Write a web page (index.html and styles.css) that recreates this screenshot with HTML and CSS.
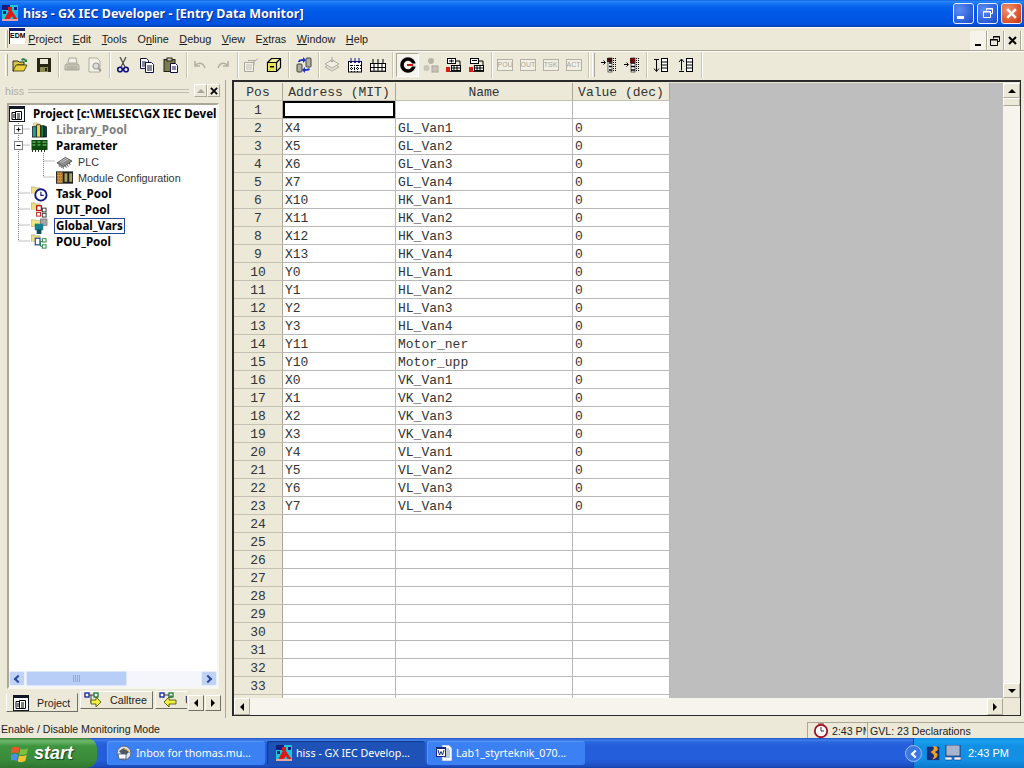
FILE: index.html
```html
<!DOCTYPE html>
<html lang="en">
<head>
<meta charset="utf-8">
<title>hiss - GX IEC Developer - [Entry Data Monitor]</title>
<link rel="stylesheet" href="styles.css">
</head>
<body>
<svg class="defs" width="0" height="0" aria-hidden="true">
  <defs>
    <symbol id="i-app" viewBox="0 0 16 16">
      <rect width="16" height="16" fill="#18c8d8"/><rect x="0" y="0" width="8" height="5" fill="#102080"/>
      <rect x="1" y="6" width="3" height="3" fill="#102080"/><rect x="12" y="2" width="3" height="3" fill="#102080"/>
      <rect x="6" y="2" width="4" height="4" fill="#e01818"/><path d="M7 6h3l4 6 2 3h-4l-2-4-3 4H2l3-6z" fill="#e01818"/>
      <rect x="0" y="14" width="16" height="2" fill="#e8a0a0"/>
    </symbol>
    <symbol id="i-open" viewBox="0 0 16 16">
      <path d="M1 4h5l1 1h5v3H5L2 14H1z" fill="#d8c850" stroke="#000" stroke-width=".8"/>
      <path d="M4 8h11l-3 6H1z" fill="#e8d040" stroke="#303000" stroke-width=".8"/>
      <path d="M9 2c2-1 4-1 5 1l1-1v3h-3l1-1c-1-1-2-1-3 0z" fill="#208040"/>
    </symbol>
    <symbol id="i-save" viewBox="0 0 16 16">
      <rect x="1" y="1" width="14" height="14" fill="#262612"/><rect x="4" y="2" width="8" height="5" fill="#ece9d8"/>
      <rect x="4" y="10" width="8" height="5" fill="#8a8a50"/><rect x="9" y="11" width="2" height="3" fill="#262612"/>
    </symbol>
    <symbol id="i-print" viewBox="0 0 16 16">
      <path d="M5 1h7l1 5H4z" fill="#f4f2e8" stroke="#a8a59a"/><path d="M2 7h12l1 2v4H1V9z" fill="#c8c5b8" stroke="#a8a59a"/>
      <path d="M3 10h10M3 12h10" stroke="#a8a59a"/>
    </symbol>
    <symbol id="i-preview" viewBox="0 0 16 16">
      <path d="M2 1h8l3 3v11H2z" fill="#f4f2e8" stroke="#b0ad9f"/><circle cx="9" cy="9" r="3" fill="#ddd" stroke="#a09d90" stroke-width="1.2"/>
      <path d="M11 11l3 3" stroke="#a09d90" stroke-width="2"/>
    </symbol>
    <symbol id="i-cut" viewBox="0 0 16 16">
      <path d="M5 0l5 10M11 0L6 10" stroke="#505050" stroke-width="1.3" fill="none"/>
      <circle cx="5" cy="12.5" r="2.3" fill="none" stroke="#101080" stroke-width="1.6"/>
      <circle cx="11" cy="12.5" r="2.3" fill="none" stroke="#101080" stroke-width="1.6"/>
    </symbol>
    <symbol id="i-copy" viewBox="0 0 16 16">
      <path d="M1.500 1.500h6l2 2v8h-8z" fill="#fff" stroke="#101040"/><path d="M6.500 5.500h6l2 2v8h-8z" fill="#fff" stroke="#101040"/>
      <path d="M3 5h4M3 7h3M3 9h3M8 9h5M8 11h5M8 13h5" stroke="#101040"/>
    </symbol>
    <symbol id="i-paste" viewBox="0 0 16 16">
      <rect x="1" y="2.500" width="11" height="12" fill="#7c7c50" stroke="#202010"/><rect x="4" y="1" width="5" height="3" fill="#d0d0c0" stroke="#202010"/>
      <path d="M7.500 6.500h5l2 2v7h-7z" fill="#fff" stroke="#101040"/><path d="M9 10h4M9 12h4" stroke="#101040"/>
    </symbol>
    <symbol id="i-undo" viewBox="0 0 16 16"><path d="M3 4v5h5M3 9c3-4 8-4 10 2" fill="none" stroke="#b4b1a4" stroke-width="1.600"/></symbol>
    <symbol id="i-redo" viewBox="0 0 16 16"><path d="M13 4v5H8M13 9c-3-4-8-4-10 2" fill="none" stroke="#b4b1a4" stroke-width="1.600"/></symbol>
    <symbol id="i-props" viewBox="0 0 16 16">
      <path d="M1.500 5.500h9v9h-9z" fill="#f4f2e8" stroke="#aaa79a"/><path d="M5 3.500h8l2-2M11 3v5" stroke="#aaa79a" fill="none"/>
      <path d="M3 8h6M3 10h6M3 12h6" stroke="#c0bdb0"/>
    </symbol>
    <symbol id="i-box" viewBox="0 0 16 16">
      <path d="M1.500 5.500l4-4h9v9l-4 4h-9z" fill="#f0f0a0" stroke="#000" stroke-width="1.200"/>
      <path d="M1.500 5.500h9v9M10.500 5.500l4-4" fill="none" stroke="#000" stroke-width="1.200"/>
      <rect x="2" y="6" width="8" height="8" fill="#e8e060"/><rect x="4" y="9" width="4" height="1.500" fill="#000"/>
    </symbol>
    <symbol id="i-compare" viewBox="0 0 16 16">
      <rect x="1" y="7" width="5" height="8" rx="1" fill="#b0b0a0" stroke="#404040"/><rect x="10" y="1" width="5" height="9" rx="1" fill="#b0b0a0" stroke="#404040"/>
      <path d="M2 5c0-2 2-3 5-3V0l3 3-3 3V4C5 4 4 4 4 5z" fill="#2030c0"/><path d="M14 12c0 1-2 2-5 2v2l-3-3 3-3v2c2 0 3 0 3-1z" fill="#2030c0"/>
    </symbol>
    <symbol id="i-stack" viewBox="0 0 16 16">
      <path d="M1 10l7-4 7 4-7 4z" fill="#e4e1d4" stroke="#b0ad9f"/><path d="M1 7l7-4 7 4-7 4z" fill="#f0eee2" stroke="#b0ad9f"/>
      <path d="M8 0v5M6 3l2 2 2-2" stroke="#a8a59a" fill="none"/>
    </symbol>
    <symbol id="i-grid1" viewBox="0 0 16 16">
      <rect x="1.500" y="4.500" width="13" height="10.500" fill="#fff" stroke="#000"/>
      <path d="M1 8.500h14M1 11.500h14M4.500 8v7M7.500 8v7M10.500 8v7" stroke="#000" stroke-dasharray="1 1"/>
      <path d="M4 1v5M2.500 4L4 6l1.500-2M8 1v5M6.500 4L8 6l1.500-2M12 1v5M10.500 4L12 6l1.500-2" stroke="#1818a0" fill="none"/>
    </symbol>
    <symbol id="i-grid2" viewBox="0 0 16 16">
      <rect x=".5" y="6.500" width="15" height="8" fill="#fff" stroke="#000"/>
      <path d="M0 10.500h16M4 7v8M8 7v8M12 7v8" stroke="#000"/>
      <path d="M3 2v4M8 2v4M13 2v4" stroke="#000"/>
      <path d="M1 14h14" stroke="#404040"/>
    </symbol>
    <symbol id="i-c" viewBox="0 0 16 16">
      <circle cx="8" cy="8" r="6" fill="none" stroke="#000" stroke-width="3.600"/>
      <path d="M9 8h7" stroke="#ece9d8" stroke-width="3"/><path d="M7 8h6" stroke="#c81818" stroke-width="2"/>
    </symbol>
    <symbol id="i-gnet" viewBox="0 0 16 16">
      <circle cx="8" cy="4" r="3" fill="#b8b5a8"/><circle cx="3.500" cy="11" r="3" fill="#c8c5b8"/><rect x="9" y="9" width="6" height="6" fill="#c8c5b8" stroke="#a8a59a"/>
    </symbol>
    <symbol id="i-net1" viewBox="0 0 16 16">
      <rect x="1.500" y="1.500" width="8" height="5" fill="#fff" stroke="#000"/><path d="M3 4h5M5.500 2.500v3" stroke="#000"/>
      <path d="M9 4h5v4" fill="none" stroke="#000"/>
      <rect x="5.500" y="8.500" width="9" height="5" fill="#fff" stroke="#000"/><path d="M6 11h8M8 9v4M11 9v4" stroke="#000"/>
      <path d="M0 10h4v5H0z" fill="#e01818"/><rect x="4" y="14" width="11" height="1" fill="#202020"/>
    </symbol>
    <symbol id="i-net2" viewBox="0 0 16 16">
      <rect x="1.500" y="1.500" width="8" height="5" fill="#fff" stroke="#000"/><path d="M3 3.500h5" stroke="#000"/>
      <path d="M9 4h5v4" fill="none" stroke="#000"/>
      <rect x="5.500" y="8.500" width="9" height="5" fill="#fff" stroke="#000"/><path d="M6 11h8M8 9v4M11 9v4" stroke="#000"/>
      <path d="M0 10h4v5H0z" fill="#e01818"/><rect x="4" y="14" width="11" height="1" fill="#202020"/>
    </symbol>
    <symbol id="i-ins1" viewBox="0 0 16 16">
      <rect x="7" y="1" width="4" height="14" fill="#fff" stroke="#000" stroke-width=".6"/>
      <path d="M8 2.500h2.800M8 6h2.800M8 9.500h2.800M8 13h2.800" stroke="#000" stroke-width="1.500"/>
      <rect x="6" y="1" width="5" height="4" fill="#401010"/><path d="M12.500 1v14M14.500 1v14" stroke="#000" stroke-dasharray="1 1"/>
      <path d="M0 5.500h4M2.500 3.500l2 2-2 2" stroke="#000" fill="none"/>
    </symbol>
    <symbol id="i-ins2" viewBox="0 0 16 16">
      <rect x="7" y="1" width="4" height="14" fill="#fff" stroke="#000" stroke-width=".6"/>
      <path d="M7 6h4M7 9.500h4M7 13h4" stroke="#000" stroke-width="1.500"/>
      <rect x="6" y="1" width="5" height="5" fill="#601010"/><path d="M12.500 1v14M14.500 1v14" stroke="#000" stroke-dasharray="1 1"/>
      <path d="M0 7.500h4M2.500 5.500l2 2-2 2" stroke="#000" fill="none"/>
    </symbol>
    <symbol id="i-ind1" viewBox="0 0 16 16">
      <path d="M1 2.500h5M3.500 3v11M1 11.500l2.500 3 2.500-3" stroke="#000" fill="none"/>
      <rect x="8.500" y="1.500" width="6" height="13" fill="#fff" stroke="#000"/><path d="M8 5h7M8 8h7M8 11h7" stroke="#000"/>
    </symbol>
    <symbol id="i-ind2" viewBox="0 0 16 16">
      <path d="M1 5l2.500-3L6 5M3.500 2.500v11M1 14.500h5" stroke="#000" fill="none"/>
      <rect x="8.500" y="1.500" width="6" height="13" fill="#fff" stroke="#000"/><path d="M8 5h7M8 8h7M8 11h7" stroke="#000"/>
    </symbol>
    <symbol id="i-project" viewBox="0 0 16 16">
      <rect width="16" height="16" fill="#101828"/><rect x="1" y="3" width="14" height="12" fill="#fff"/>
      <path d="M3 6.500h5v7H3z" fill="#fff" stroke="#000"/><path d="M6.500 5.500h6v8h-6z" fill="#fff" stroke="#000"/><path d="M8 8h3M8 10h3M8 12h3M4 9h2M4 11h2" stroke="#000"/>
    </symbol>
    <symbol id="i-lib" viewBox="0 0 17 17">
      <path d="M2 1h6v3H2z" fill="#ece8a8" stroke="#a8a080" stroke-width=".5"/>
      <rect x="1" y="5" width="4" height="11" fill="#20a0a0" stroke="#000" stroke-width=".7"/>
      <rect x="5.500" y="3" width="4" height="13" fill="#e8d830" stroke="#000" stroke-width=".7"/>
      <rect x="10" y="4" width="3" height="12" fill="#208040" stroke="#000" stroke-width=".7"/>
      <path d="M13 4l3 1v11h-3z" fill="#104040" stroke="#000" stroke-width=".7"/>
    </symbol>
    <symbol id="i-param" viewBox="0 0 16 16">
      <rect y="2" width="16" height="10" fill="#0c4a10"/>
      <path d="M1 4h3M6 4h3M11 4h4M1 7h3M6 7h3M11 7h4" stroke="#80e080"/>
      <path d="M1 12v2M4 12v2M7 12v2M10 12v2M13 12v2" stroke="#204020"/>
    </symbol>
    <symbol id="i-chip" viewBox="0 0 18 16">
      <path d="M1 9l9-6 7 4-9 6z" fill="#8a8a88" stroke="#303030" stroke-width=".7"/>
      <path d="M3 11l1 2M5 12l1 2M7 13l1 2M10 12l1 2M12 11l1 2M14 9l1 2" stroke="#404040"/>
      <path d="M4 8l8-5M6 9l8-5" stroke="#c8c8c8"/>
    </symbol>
    <symbol id="i-module" viewBox="0 0 18 16">
      <rect y="1" width="18" height="13" fill="#202020"/><rect x="1" y="2" width="6" height="11" fill="#d89840"/>
      <path d="M1 4h6M1 7h6M1 10h6" stroke="#603010" stroke-dasharray="1 1"/>
      <rect x="9" y="3" width="3" height="9" fill="#a8a060"/><rect x="14" y="3" width="3" height="9" fill="#a8a060"/>
    </symbol>
    <symbol id="i-folder" viewBox="0 0 10 8"><path d="M0 1h4l1 1h5v6H0z" fill="#ecdf88" stroke="#9a9468" stroke-width=".6"/></symbol>
    <symbol id="i-task" viewBox="0 0 18 17">
      <use href="#i-folder" x="0" y="0" width="10" height="8"/>
      <circle cx="10.500" cy="9.500" r="6" fill="#fff" stroke="#101880" stroke-width="2"/>
      <path d="M10.500 6v4h3" stroke="#101880" fill="none" stroke-width="1.200"/>
    </symbol>
    <symbol id="i-dut" viewBox="0 0 18 17">
      <use href="#i-folder" x="0" y="0" width="10" height="8"/>
      <rect x="6" y="4" width="5" height="5" fill="#fff" stroke="#c01818" stroke-width="1.400"/>
      <rect x="12" y="6.500" width="4" height="4" fill="#fff" stroke="#303030"/>
      <rect x="6" y="11" width="4" height="4" fill="#fff" stroke="#c01818"/><rect x="12" y="12" width="4" height="4" fill="#fff" stroke="#303030"/>
    </symbol>
    <symbol id="i-global" viewBox="0 0 18 17">
      <path d="M0 2h5l1 1h5v6H0z" fill="#f0e880" stroke="#a8a060" stroke-width=".6"/>
      <rect x="10" y="1" width="7" height="7" fill="#a8a5a8" stroke="#605860" stroke-width=".6"/>
      <rect x="4" y="6" width="9" height="7" fill="#18808c"/><rect x="6" y="12" width="5" height="5" fill="#0c5060"/>
    </symbol>
    <symbol id="i-pou" viewBox="0 0 18 17">
      <use href="#i-folder" x="0" y="0" width="10" height="8"/>
      <rect x="4.500" y="4.500" width="5" height="7" fill="#fff" stroke="#2038a0" stroke-width="1.200"/>
      <rect x="12" y="5" width="4" height="3.500" fill="#fff" stroke="#208040"/><rect x="12" y="11.500" width="4" height="3.500" fill="#fff" stroke="#208040"/>
      <path d="M10 8h2M10 8v5h2" stroke="#208040" fill="none"/>
    </symbol>
    <symbol id="i-calltree" viewBox="0 0 18 16">
      <rect x="1" y="1" width="4" height="4" fill="#fff" stroke="#1020a0" stroke-width="1.300"/>
      <rect x="10" y="1" width="4" height="4" fill="#fff" stroke="#108030" stroke-width="1.300"/>
      <path d="M5 3h5M7 3v8" stroke="#404040" fill="none"/>
      <path d="M7 8h5V5l5 5-5 5v-3H7z" fill="#f0f040" stroke="#404010" stroke-width=".8"/>
    </symbol>
    <symbol id="i-usedby" viewBox="0 0 18 16">
      <rect x="1" y="1" width="4" height="4" fill="#fff" stroke="#1020a0" stroke-width="1.300"/>
      <rect x="10" y="1" width="4" height="4" fill="#fff" stroke="#108030" stroke-width="1.300"/>
      <path d="M5 3h5M12 3v3" stroke="#404040" fill="none"/>
      <path d="M17 8h-7V5L5 10l5 5v-3h7z" fill="#f0f040" stroke="#404010" stroke-width=".8"/>
    </symbol>
    <symbol id="i-outlook" viewBox="0 0 16 16">
      <circle cx="8" cy="8" r="7" fill="#d8e4f4" stroke="#506080"/><path d="M3 6l5-3 5 4-5 5z" fill="#505860"/>
      <path d="M2 9h8v5H3z" fill="#fff" stroke="#405070" stroke-width=".8"/><path d="M8 4c3 0 5 2 6 4" stroke="#e8a030" fill="none"/>
    </symbol>
    <symbol id="i-word" viewBox="0 0 16 16">
      <path d="M6 0h7l3 3v13H6z" fill="#fff" stroke="#6080a0" stroke-width=".6"/>
      <path d="M8 4h5M8 6h6M8 8h6M8 10h6M8 12h6" stroke="#7090b0"/>
      <rect x="0" y="2" width="10" height="10" fill="#18287c"/><rect x="1" y="4" width="8" height="7" fill="#fff"/>
      <path d="M2 5l1.500 5L5 6.500 6.500 10 8 5" fill="none" stroke="#18287c"/>
    </symbol>
    <symbol id="i-flag" viewBox="0 0 20 20">
      <path d="M1 4c3-1.500 5-1.500 8 0l-1.500 6c-2.500-1.500-4.500-1.500-8 0z" fill="#e8582c"/>
      <path d="M10 5c3 1 5 1 8-.5L16.500 10.500c-3 1.500-5 1.500-8 .5z" fill="#7cc040"/>
      <path d="M-.5 11.500c3-1.500 5-1.500 8 0L6 18c-2.500-1.500-4.500-1.500-8 0z" fill="#4d90e8"/>
      <path d="M8.500 12c3 1 5 1 8-.5L15 18c-3 1.500-5 1.500-8 .5z" fill="#f4c430"/>
    </symbol>
    <symbol id="i-clock" viewBox="0 0 16 16">
      <circle cx="8" cy="8" r="6.200" fill="#fff" stroke="#a01020" stroke-width="1.800"/>
      <path d="M8 4v4h3" stroke="#303030" fill="none"/><path d="M5 1h6M5 15h0" stroke="#a01020"/>
    </symbol>
    <symbol id="i-tray1" viewBox="0 0 16 18">
      <rect x="0" y="2" width="14" height="15" fill="#15307c"/><path d="M7 1c4 0 6 2 5 5l-3 2 3 2c0 3-2 6-6 6 2-2 3-4 1-6L4 8l3-2c1-2 1-3 0-5z" fill="#f4a020"/>
    </symbol>
    <symbol id="i-tray2" viewBox="0 0 16 16">
      <rect x="1" y="0" width="14" height="11" fill="#d8d8d8" stroke="#18307c"/><rect x="2" y="1" width="12" height="9" fill="#a8b4cc"/>
      <rect x="0" y="12" width="7" height="3" fill="#f4f4f4" stroke="#18307c" stroke-width=".6"/><rect x="9" y="12" width="7" height="3" fill="#f4f4f4" stroke="#18307c" stroke-width=".6"/>
    </symbol>
    <symbol id="i-win-x" viewBox="0 0 9 9"><path d="M1 1l7 7M8 1L1 8" stroke="currentColor" stroke-width="2" fill="none"/></symbol>
    <symbol id="i-restore" viewBox="0 0 10 10"><path d="M3.500 2.500v-2h6v5h-2M.5 3.500h7v6h-7z" fill="none" stroke="currentColor"/><path d="M3 1h7M0 4h8" stroke="currentColor" stroke-width="1"/></symbol>
  </defs>
</svg>

<div class="app">
  <header class="titlebar">
    <svg class="ico16 title-icon"><use href="#i-app"/></svg>
    <span class="title-text">hiss - GX IEC Developer - [Entry Data Monitor]</span>
    <div class="win-btns">
      <span class="win-btn"><span class="min-glyph"></span></span>
      <span class="win-btn"><svg class="restore-glyph"><use href="#i-restore"/></svg></span>
      <span class="win-btn win-close"><svg class="close-glyph"><use href="#i-win-x"/></svg></span>
    </div>
  </header>

  <nav class="menubar">
    <span class="grip"></span>
    <span class="edm-icon">EDM</span>
    <span class="menu-item"><u>P</u>roject</span>
    <span class="menu-item"><u>E</u>dit</span>
    <span class="menu-item"><u>T</u>ools</span>
    <span class="menu-item">O<u>n</u>line</span>
    <span class="menu-item"><u>D</u>ebug</span>
    <span class="menu-item"><u>V</u>iew</span>
    <span class="menu-item">E<u>x</u>tras</span>
    <span class="menu-item"><u>W</u>indow</span>
    <span class="menu-item"><u>H</u>elp</span>
    <div class="mdi-btns">
      <span class="mdi-btn"><span class="mdi-min"></span></span>
      <span class="mdi-btn"><svg class="mdi-restore"><use href="#i-restore"/></svg></span>
      <span class="mdi-btn"><svg class="mdi-close"><use href="#i-win-x"/></svg></span>
    </div>
  </nav>

  <div class="toolbar">
    <span class="grip tb-grip"></span>
    <span class="tb tb-w"><svg class="ico16"><use href="#i-open"/></svg></span>
    <span class="tb tb-w"><svg class="ico16"><use href="#i-save"/></svg></span>
    <span class="sep sep-4"></span>
    <span class="tb"><svg class="ico16"><use href="#i-print"/></svg></span>
    <span class="tb"><svg class="ico16"><use href="#i-preview"/></svg></span>
    <span class="sep"></span>
    <span class="tb tb-w"><svg class="ico16"><use href="#i-cut"/></svg></span>
    <span class="tb tb-w"><svg class="ico16"><use href="#i-copy"/></svg></span>
    <span class="tb tb-w"><svg class="ico16"><use href="#i-paste"/></svg></span>
    <span class="sep"></span>
    <span class="tb"><svg class="ico16"><use href="#i-undo"/></svg></span>
    <span class="tb"><svg class="ico16"><use href="#i-redo"/></svg></span>
    <span class="sep"></span>
    <span class="tb"><svg class="ico16"><use href="#i-props"/></svg></span>
    <span class="tb"><svg class="ico16"><use href="#i-box"/></svg></span>
    <span class="sep sep-7"></span>
    <span class="tb"><svg class="ico16"><use href="#i-compare"/></svg></span>
    <span class="sep"></span>
    <span class="tb"><svg class="ico16"><use href="#i-stack"/></svg></span>
    <span class="tb"><svg class="ico16"><use href="#i-grid1"/></svg></span>
    <span class="tb"><svg class="ico16"><use href="#i-grid2"/></svg></span>
    <span class="sep sep-7"></span>
    <span class="tb tb-pressed"><svg class="ico16"><use href="#i-c"/></svg></span>
    <span class="tb"><svg class="ico16"><use href="#i-gnet"/></svg></span>
    <span class="tb"><svg class="ico16"><use href="#i-net1"/></svg></span>
    <span class="tb"><svg class="ico16"><use href="#i-net2"/></svg></span>
    <span class="sep"></span>
    <span class="tb"><span class="tag">POU</span></span>
    <span class="tb"><span class="tag">OUT</span></span>
    <span class="tb"><span class="tag">TSK</span></span>
    <span class="tb"><span class="tag">ACT</span></span>
    <span class="sep sep-7"></span>
    <span class="grip tb-grip2"></span>
    <span class="tb"><svg class="ico16"><use href="#i-ins1"/></svg></span>
    <span class="tb"><svg class="ico16"><use href="#i-ins2"/></svg></span>
    <span class="sep"></span>
    <span class="tb tb-x"><svg class="ico16"><use href="#i-ind1"/></svg></span>
    <span class="tb tb-x"><svg class="ico16"><use href="#i-ind2"/></svg></span>
    <span class="sep"></span>
  </div>

  <main class="workspace">
    <aside class="dock">
      <div class="dock-head">
        <span class="dock-title">hiss</span>
        <span class="dock-grip"></span>
        <span class="dock-btn"><span class="tri-up tri-gray"></span></span>
        <span class="dock-btn"><svg class="dock-x"><use href="#i-win-x"/></svg></span>
      </div>
      <div class="tree-box">
        <div class="tree">
          <svg class="tree-lines">
            <path d="M9.500 10v126M9.500 24h12M9.500 40h12M9.500 88h12M9.500 104h12M9.500 120h12M9.500 136h12M34.500 48v24M34.500 56h12M34.500 72h12" stroke="#808080" stroke-dasharray="1 1" fill="none"/>
            <rect x="5.500" y="20.500" width="8" height="8" fill="#fff" stroke="#808080"/>
            <path d="M7.500 24.500h4M9.500 22.500v4" stroke="#000"/>
            <rect x="5.500" y="36.500" width="8" height="8" fill="#fff" stroke="#808080"/>
            <path d="M7.500 40.500h4" stroke="#000"/>
          </svg>
          <div class="node node-root"><svg class="ico16"><use href="#i-project"/></svg><b class="clip">Project [c:\MELSEC\GX IEC Devel</b></div>
          <div class="node node-l1"><svg class="ico17"><use href="#i-lib"/></svg><b class="muted">Library_Pool</b></div>
          <div class="node node-l1"><svg class="ico17"><use href="#i-param"/></svg><b>Parameter</b></div>
          <div class="node node-l2"><svg class="ico17"><use href="#i-chip"/></svg><span>PLC</span></div>
          <div class="node node-l2"><svg class="ico17"><use href="#i-module"/></svg><span>Module Configuration</span></div>
          <div class="node node-l1"><svg class="ico17"><use href="#i-task"/></svg><b>Task_Pool</b></div>
          <div class="node node-l1"><svg class="ico17"><use href="#i-dut"/></svg><b>DUT_Pool</b></div>
          <div class="node node-l1"><svg class="ico17"><use href="#i-global"/></svg><b class="selected">Global_Vars</b></div>
          <div class="node node-l1"><svg class="ico17"><use href="#i-pou"/></svg><b>POU_Pool</b></div>
        </div>
        <div class="tree-scroll">
          <span class="blue-btn"><span class="chev chev-l"></span></span>
          <span class="blue-thumb"><span class="thumb-grip"></span></span>
          <span class="blue-track"></span>
          <span class="blue-btn"><span class="chev chev-r"></span></span>
        </div>
      </div>
      <div class="tabs">
        <span class="tab tab-active"><svg class="ico16"><use href="#i-project"/></svg><span>Project</span></span>
        <span class="tab tab-2"><svg class="ico18"><use href="#i-calltree"/></svg><span>Calltree</span></span>
        <span class="tab tab-3"><svg class="ico18"><use href="#i-usedby"/></svg><span>U</span></span>
        <span class="tab-arrow"><span class="tri-left"></span></span>
        <span class="tab-arrow"><span class="tri-right"></span></span>
      </div>
    </aside>

    <section class="mdi">
      <div class="mdi-top">
        <div class="grid-area">
          <table class="grid">
            <thead>
              <tr><th class="c-pos">Pos</th><th class="c-addr">Address (MIT)</th><th class="c-name">Name</th><th class="c-val">Value (dec)</th></tr>
            </thead>
            <tbody>
              <tr><th>1</th><td class="cur"></td><td></td><td></td></tr>
              <tr><th>2</th><td>X4</td><td>GL_Van1</td><td>0</td></tr>
              <tr><th>3</th><td>X5</td><td>GL_Van2</td><td>0</td></tr>
              <tr><th>4</th><td>X6</td><td>GL_Van3</td><td>0</td></tr>
              <tr><th>5</th><td>X7</td><td>GL_Van4</td><td>0</td></tr>
              <tr><th>6</th><td>X10</td><td>HK_Van1</td><td>0</td></tr>
              <tr><th>7</th><td>X11</td><td>HK_Van2</td><td>0</td></tr>
              <tr><th>8</th><td>X12</td><td>HK_Van3</td><td>0</td></tr>
              <tr><th>9</th><td>X13</td><td>HK_Van4</td><td>0</td></tr>
              <tr><th>10</th><td>Y0</td><td>HL_Van1</td><td>0</td></tr>
              <tr><th>11</th><td>Y1</td><td>HL_Van2</td><td>0</td></tr>
              <tr><th>12</th><td>Y2</td><td>HL_Van3</td><td>0</td></tr>
              <tr><th>13</th><td>Y3</td><td>HL_Van4</td><td>0</td></tr>
              <tr><th>14</th><td>Y11</td><td>Motor_ner</td><td>0</td></tr>
              <tr><th>15</th><td>Y10</td><td>Motor_upp</td><td>0</td></tr>
              <tr><th>16</th><td>X0</td><td>VK_Van1</td><td>0</td></tr>
              <tr><th>17</th><td>X1</td><td>VK_Van2</td><td>0</td></tr>
              <tr><th>18</th><td>X2</td><td>VK_Van3</td><td>0</td></tr>
              <tr><th>19</th><td>X3</td><td>VK_Van4</td><td>0</td></tr>
              <tr><th>20</th><td>Y4</td><td>VL_Van1</td><td>0</td></tr>
              <tr><th>21</th><td>Y5</td><td>VL_Van2</td><td>0</td></tr>
              <tr><th>22</th><td>Y6</td><td>VL_Van3</td><td>0</td></tr>
              <tr><th>23</th><td>Y7</td><td>VL_Van4</td><td>0</td></tr>
              <tr><th>24</th><td></td><td></td><td></td></tr>
              <tr><th>25</th><td></td><td></td><td></td></tr>
              <tr><th>26</th><td></td><td></td><td></td></tr>
              <tr><th>27</th><td></td><td></td><td></td></tr>
              <tr><th>28</th><td></td><td></td><td></td></tr>
              <tr><th>29</th><td></td><td></td><td></td></tr>
              <tr><th>30</th><td></td><td></td><td></td></tr>
              <tr><th>31</th><td></td><td></td><td></td></tr>
              <tr><th>32</th><td></td><td></td><td></td></tr>
              <tr><th>33</th><td></td><td></td><td></td></tr>
              <tr><th></th><td></td><td></td><td></td></tr>
            </tbody>
          </table>
        </div>
        <div class="vscroll">
          <span class="sb-btn"><span class="tri-up"></span></span>
          <span class="sb-thumb"></span>
          <span class="sb-track"></span>
          <span class="sb-btn"><span class="tri-down"></span></span>
        </div>
      </div>
      <div class="hscroll">
        <span class="sb-btn sb-h"><span class="tri-left"></span></span>
        <span class="sb-track"></span>
        <span class="sb-btn sb-h"><span class="tri-right"></span></span>
        <span class="sb-corner"></span>
      </div>
    </section>
  </main>

  <footer class="statusbar">
    <span class="status-msg">Enable / Disable Monitoring Mode</span>
    <span class="status-cell status-time"><svg class="ico16"><use href="#i-clock"/></svg><span class="time-clip">2:43 PM</span></span>
    <span class="status-cell status-decl">GVL: 23 Declarations</span>
  </footer>

  <div class="taskbar">
    <span class="start"><svg class="flag"><use href="#i-flag"/></svg><span class="start-text">start</span></span>
    <div class="tasks">
      <span class="task"><svg class="ico16"><use href="#i-outlook"/></svg><span>Inbox for thomas.mu...</span></span>
      <span class="task task-active"><svg class="ico16"><use href="#i-app"/></svg><span>hiss - GX IEC Develop...</span></span>
      <span class="task"><svg class="ico16"><use href="#i-word"/></svg><span>Lab1_styrteknik_070...</span></span>
    </div>
    <div class="tray">
      <span class="tray-chevron"><span class="chev-white"></span></span>
      <svg class="ico16 tray-a"><use href="#i-tray1"/></svg>
      <svg class="ico16 tray-b"><use href="#i-tray2"/></svg>
      <span class="clock">2:43 PM</span>
    </div>
  </div>
</div>
</body>
</html>
```
FILE: styles.css
```css
* { box-sizing: border-box; }
html, body { margin: 0; padding: 0; }
body { background: #ece9d8; font: 10.7px "Liberation Sans", sans-serif; color: #000; }
.defs { position: absolute; }
svg { display: block; overflow: hidden; flex: none; }
.ico16 { width: 16px; height: 16px; }
.ico17 { width: 17px; height: 16px; }
.ico18 { width: 18px; height: 16px; }

.app { width: 1024px; height: 768px; display: flex; flex-direction: column; overflow: hidden; background: #ece9d8; }

/* Title bar */
.titlebar {
  height: 27px; flex: none; display: flex; align-items: center; padding: 0 2px 1px 2px;
  background: linear-gradient(#0a55d8 0, #2d8af6 1px, #1a78f4 3px, #0462ec 7px, #0058e6 13px, #0055e1 20px, #0053de 24px, #0046c4 26px, #003cac 27px);
}
.title-icon { margin-right: 5px; }
.title-text { color: #fff; font: 700 12.5px "Noto Sans", sans-serif; text-shadow: 1px 1px 0 #0a2a90; white-space: nowrap; }
.win-btns { margin-left: auto; display: flex; gap: 3px; }
.win-btn {
  width: 21px; height: 21px; border: 1px solid #e8eeff; border-radius: 3px; display: flex; align-items: center; justify-content: center;
  background: radial-gradient(circle at 30% 30%, #5d8df0, #2a5ed8 70%, #1a44b8);
  color: #fff;
}
.win-close { background: radial-gradient(circle at 30% 30%, #ee9070, #dc5a30 60%, #c03010); }
.min-glyph { width: 7px; height: 3px; background: #fff; margin: 8px 6px 0 0; }
.restore-glyph { width: 10px; height: 10px; }
.close-glyph { width: 11px; height: 11px; }

/* Menu bar */
.menubar { height: 24px; flex: none; display: flex; align-items: center; padding-left: 5px; border-bottom: 1px solid #aca899; box-shadow: inset 0 1px 0 #fbfaf5; }
.grip { width: 3px; height: 18px; border-left: 1px solid #fff; border-right: 1px solid #aca899; flex: none; }
.edm-icon {
  width: 16px; height: 16px; margin: -5px 0 0 1px; background: #fff; border-top: 3px solid #141c70; border-left: 1px solid #141c70;
  font: 700 7px/9px "Liberation Sans", sans-serif; color: #000; text-align: center; overflow: hidden; flex: none;
}
.menu-item { padding: 0 5.3px; white-space: nowrap; color: #1a1a1a; font-size: 10.8px; }
.menu-item u { text-underline-offset: 1px; }
.edm-icon + .menu-item { margin-left: -2px; }
.mdi-btns { margin-left: auto; display: flex; height: 19px; margin-top: 4px; margin-right: 3px; }
.mdi-btn { width: 17px; display: flex; align-items: center; justify-content: center; border-right: 1px solid #aca899; box-shadow: 1px 0 0 #fff; }
.mdi-btn:first-child { background: #f5f3ea; }
.mdi-min { width: 6px; height: 2px; background: #000; margin-top: 9px; }
.mdi-restore { width: 10px; height: 10px; color: #000; }
.mdi-close { width: 9px; height: 9px; color: #000; }

/* Toolbar */
.toolbar { height: 29px; flex: none; display: flex; align-items: center; padding: 0 0 1px 5px; box-shadow: inset 0 1px 0 #fbfaf5; }
.tb-grip { height: 22px; }
.tb { width: 23px; height: 24px; display: flex; align-items: center; justify-content: center; flex: none; }
.tb-w { width: 24px; }
.tb-x { width: 25px; }
.tb-pressed { background: #f6f4ec; border: 1px solid; border-color: #aca899 #fff #fff #aca899; }
.sep { width: 2px; height: 26px; border-left: 1px solid #c8c5b6; border-right: 1px solid #fff; margin-left: 3px; flex: none; }
.sep-4 { margin-left: 2px; }
.sep-7 { margin-right: 2px; }
.tb-grip2 { height: 24px; margin-right: 2px; }
.tag { width: 16px; height: 12px; border: 1px solid #b4b1a4; color: #a8a59a; font: 7px/10px "Liberation Sans", sans-serif; text-align: center; overflow: hidden; background: #f2f0e4; }

/* Workspace */
.workspace { flex: 1; min-height: 0; display: flex; }
.dock { width: 226px; flex: none; display: flex; flex-direction: column; padding: 3px 0 2px 0; border-right: 1px solid #aca899; margin-right: 6px; }
.dock-head { height: 15px; flex: none; display: flex; align-items: center; padding: 0 5px; }
.dock-title { color: #b0ad9f; }
.dock-grip { flex: 1; height: 4px; border-top: 1px solid #c0bdb0; border-bottom: 1px solid #c0bdb0; margin: 0 5px 0 4px; }
.dock-btn { width: 13px; height: 13px; display: flex; align-items: center; justify-content: center; border: 1px solid; border-color: #fff #aca899 #aca899 #fff; }
.dock-x { width: 8px; height: 8px; color: #000; }
.tree-box { flex: 1; min-height: 0; margin: 5px 6px 1px 7px; background: #fff; border: 2px solid; border-color: #aca899 #f6f5ee #f6f5ee #aca899; display: flex; flex-direction: column; }
.tree { flex: 1; min-height: 0; position: relative; padding-top: 1px; overflow: hidden; }
.tree-lines { position: absolute; left: 0; top: 0; width: 60px; height: 150px; }
.node { height: 16px; display: flex; align-items: center; white-space: nowrap; position: relative; }
.node b { font: 700 11.6px/14px "Noto Sans", sans-serif; }
.node-root svg { margin-right: 8px; }
.node-l1 { padding-left: 22px; }
.node-l1 svg { margin-right: 8px; }
.node-l2 { padding-left: 47px; }
.node-l2 svg { margin-right: 5px; }
.clip { overflow: hidden; width: 184px; flex: none; }
.node b.muted { color: #808080; }
.node b.selected { border: 1px solid #1f4a9c; padding: 0 1px; margin-left: -2px; height: 16px; line-height: 14px; }
.node span { color: #333; font-size: 10.8px; }
.tree-scroll { height: 16px; flex: none; display: flex; background: #f4f6fb; padding-bottom: 1px; }
.blue-btn { width: 16px; height: 15px; background: #c1d3f4; border: 1px solid #e8effc; border-radius: 2px; display: flex; align-items: center; justify-content: center; flex: none; }
.blue-thumb { width: 101px; margin-left: 1px; background: #b8cef6; border: 1px solid #dce6fa; border-radius: 2px; display: flex; align-items: center; justify-content: center; flex: none; }
.thumb-grip { width: 7px; height: 7px; background: repeating-linear-gradient(90deg, #8ea8dc 0 1px, transparent 1px 2px); }
.blue-track { flex: 1; }
.chev { width: 6px; height: 6px; border-left: 2px solid #2a4a9c; border-bottom: 2px solid #2a4a9c; }
.chev-l { transform: rotate(45deg); margin-left: 2px; }
.chev-r { transform: rotate(225deg); margin-right: 2px; }

.tabs { height: 26px; flex: none; display: flex; padding-left: 6px; align-items: flex-start; }
.tab { display: flex; align-items: center; height: 18px; margin-top: 1px; border: 1px solid; border-color: #fff #716f64 #716f64 #fff; }
.tab span { color: #222; white-space: nowrap; }
.tab-active { width: 72px; height: 19px; margin-top: 3px; border-top-color: #ece9d8; padding-left: 6px; gap: 8px; }
.tab-2 { width: 73px; margin-left: 2px; padding-left: 3px; gap: 8px; }
.tab-3 { width: 32px; margin-left: 2px; padding-left: 3px; gap: 8px; overflow: hidden; border-right: 0; }
.tab-arrow { width: 16px; height: 16px; margin-top: 5px; margin-left: 1px; border: 1px solid; border-color: #fff #716f64 #716f64 #fff; display: flex; align-items: center; justify-content: center; }

/* Triangles */
.tri-up, .tri-down, .tri-left, .tri-right { width: 0; height: 0; border: 4px solid transparent; display: block; }
.tri-up { border-bottom-color: #000; border-top-width: 0; }
.tri-gray { border-bottom-color: #a8a59a; }
.tri-down { border-top-color: #000; border-bottom-width: 0; }
.tri-left { border-right-color: #000; border-left-width: 0; }
.tri-right { border-left-color: #000; border-right-width: 0; }

/* MDI */
.mdi { flex: none; width: 789px; display: flex; flex-direction: column; margin-bottom: 2px; border: solid #2a2a2a; border-width: 2px 1px 1px 2px; background: #ece9d8; }
.mdi-top { flex: 1; min-height: 0; display: flex; padding-top: 1px; }
.grid-area { flex: 1; min-width: 0; background: #bebebe; overflow: hidden; }
.grid { table-layout: fixed; width: 436px; border-collapse: separate; border-spacing: 0; font: 13px "Liberation Mono", monospace; color: #333; }
.grid th, .grid td { height: 18px; padding: 2px 2px 0; border-right: 1px solid #b8b8b8; border-bottom: 1px solid #b8b8b8; white-space: nowrap; overflow: hidden; font-weight: 400; }
.grid td { background: #fff; }
.grid th { background: #ece9d8; border-right-color: #aca899; border-bottom-color: #c4c1b2; }
.grid thead th { padding-top: 1px; }
.c-pos { width: 49px; }
.c-addr { width: 113px; }
.c-name { width: 177px; }
.c-val { width: 97px; }
.grid td.cur { box-shadow: inset 0 0 0 2px #000; }
.vscroll { width: 17px; flex: none; display: flex; flex-direction: column; background: #f6f4ec; }
.sb-btn { height: 15px; flex: none; background: #ece9d8; border: 1px solid; border-color: #fff #aca899 #aca899 #fff; display: flex; align-items: center; justify-content: center; }
.sb-thumb { height: 8px; flex: none; background: #ece9d8; border: 1px solid; border-color: #fff #aca899 #aca899 #fff; }
.sb-track { flex: 1; background: #f6f4ec; background-image: radial-gradient(#e6e3d4 .5px, transparent .6px); background-size: 2px 2px; }
.hscroll { height: 17px; flex: none; display: flex; }
.sb-h { width: 16px; height: 17px; }
.sb-corner { width: 17px; flex: none; background: #ece9d8; }

/* Status bar */
.statusbar { height: 20px; flex: none; display: flex; align-items: center; padding: 2px 0 0 1px; font-size: 10.6px; }
.status-msg { width: 806px; flex: none; color: #222; white-space: nowrap; }
.status-cell { height: 16px; margin-top: 2px; display: flex; align-items: center; border-left: 1px solid #aca899; border-top: 1px solid #aca899; white-space: nowrap; color: #222; }
.status-time { width: 60px; padding-left: 5px; gap: 3px; overflow: hidden; }
.time-clip { width: 34px; overflow: hidden; flex: none; }
.status-decl { flex: 1; padding-left: 2px; }

/* Taskbar */
.taskbar {
  height: 30px; flex: none; display: flex; align-items: center; position: relative;
  background: linear-gradient(#1f4fc0 0, #3f80ec 2px, #2a68dc 4px, #245edb 8px, #245edb 22px, #1c4fc0 28px, #183fa8 30px);
}
.start {
  width: 97px; height: 30px; flex: none; display: flex; align-items: center; padding-left: 11px; gap: 4px;
  background: linear-gradient(#3a7d3a 0, #6fb96f 3px, #3f953f 8px, #3a8a3a 22px, #2f752f 30px);
  border-radius: 0 10px 10px 0;
}
.flag { width: 19px; height: 19px; overflow: visible; }
.start-text { color: #fff; font: italic 700 18px "Liberation Sans", sans-serif; text-shadow: 1px 1px 1px #204020; }
.tasks { display: flex; gap: 2px; margin-left: 10px; }
.task {
  width: 158px; height: 24px; display: flex; align-items: center; padding-left: 9px; gap: 4px; border-radius: 3px;
  background: #3c81f3; color: #fff; white-space: nowrap; box-shadow: inset 1px 1px 0 #5a96f6; font-family: "Noto Sans", sans-serif; font-size: 10.7px;
}
.task-active { background: #1e52b7; box-shadow: inset 1px 1px 1px #143a88; }
.tray { margin-left: auto; width: 111px; height: 30px; display: flex; align-items: center; padding-left: 12px; background: linear-gradient(#0f8be8 0, #18a0ee 3px, #1290e4 8px, #1290e4 22px, #0c78cc 30px); border-left: 1px solid #0a4aa8; position: relative; }
.tray-chevron { position: absolute; left: -9px; top: 7px; width: 17px; height: 17px; border-radius: 50%; background: #3c78e0; border: 1px solid #9cc0f4; display: flex; align-items: center; justify-content: center; }
.chev-white { width: 6px; height: 6px; border-left: 2px solid #fff; border-bottom: 2px solid #fff; transform: rotate(45deg); margin-left: 2px; }
.tray-b { margin-left: 3px; }
.clock { color: #fff; margin-left: 7px; white-space: nowrap; font-size: 11px; }
```
